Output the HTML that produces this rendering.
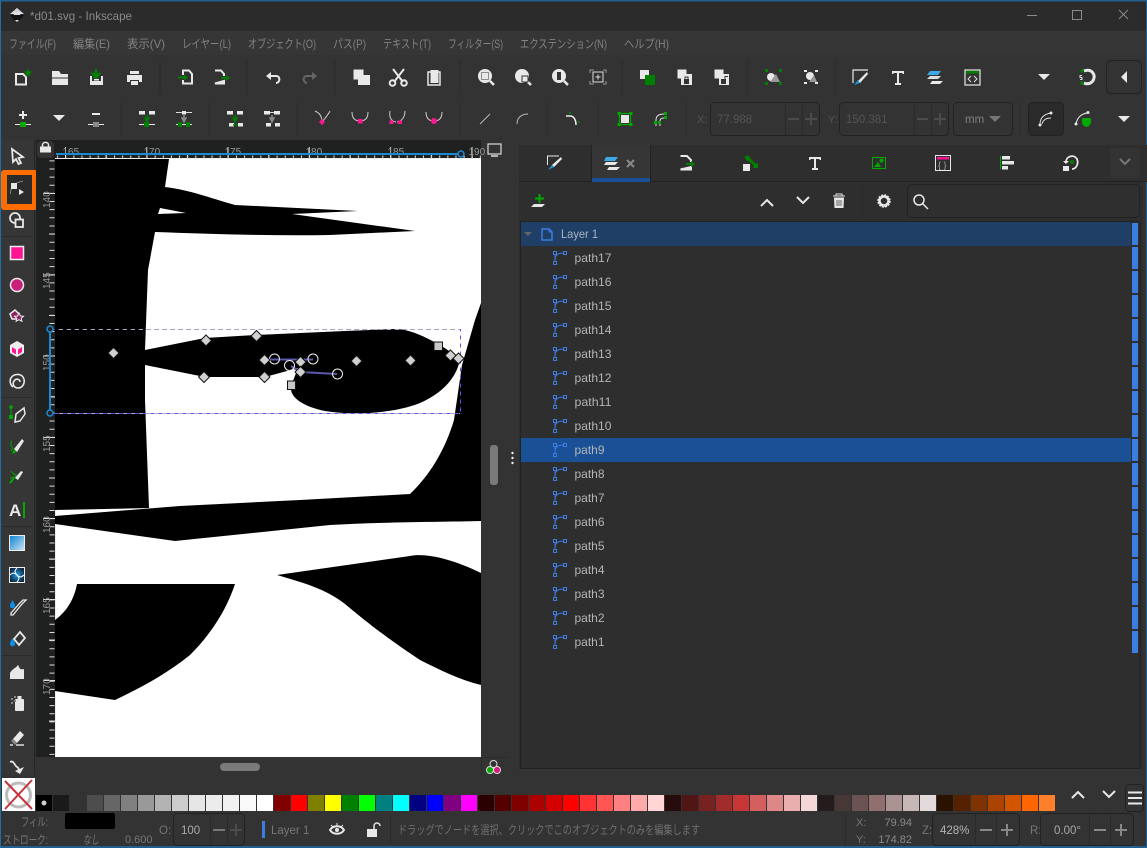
<!DOCTYPE html>
<html><head><meta charset="utf-8"><title>Inkscape</title>
<style>
html,body{margin:0;padding:0;background:#333;width:1147px;height:848px;overflow:hidden}
svg{display:block}
text{font-family:"Liberation Sans","Noto Sans CJK JP",sans-serif;font-size:11px;fill:#8f8f8f}
.m{font-size:12px;fill:#828282}
.p{font-size:12px;fill:#b4b4b4}
.w{fill:#e8e8e8}.g{fill:#008000}.k{fill:#ff1493}
.s{stroke:#e8e8e8;fill:none}
.sep{stroke:#2b2b2b;stroke-width:1}
.box{fill:#2f2f2f;stroke:#222;stroke-width:1}
</style></head><body>
<svg width="1147" height="848" viewBox="0 0 1147 848" xmlns="http://www.w3.org/2000/svg">
<defs>
<path id="nd" d="M0-5.500L5.500 0L0 5.500L-5.500 0Z" fill="#d0d0d0" stroke="#111" stroke-width="1"/>
<g id="pt"><path d="M-6.500-3V3.500M-6.500 1.500C-6.500-3-3-5 2-5" fill="none" stroke="#3b7de0" stroke-width="1"/><rect x="-8" y="-6.500" width="3" height="3" fill="none" stroke="#3b7de0"/><rect x="-8" y="3.500" width="3" height="3" fill="none" stroke="#3b7de0"/><rect x="2" y="-6.500" width="3" height="3" fill="none" stroke="#3b7de0"/></g>
</defs>
<!-- window -->
<rect width="1147" height="848" fill="#333"/>
<rect y="0" width="1147" height="31" fill="#2b2b2b"/>
<rect y="31" width="1147" height="24" fill="#363636"/>
<rect y="0" width="1147" height="1.500" fill="#1f5f92"/>
<rect y="846" width="1147" height="2" fill="#1f5f92"/>
<rect x="0" width="1" height="848" fill="#1f6fa8"/>
<rect x="1146" width="1" height="848" fill="#1f5f92"/>
<!-- title -->
<path d="M17 8L24 14L20 14L21 18L17 22L13 18L14 14L10 14Z" fill="#ddd"/><path d="M10 15L24 15L20 20L14 20Z" fill="#111"/><path d="M17 8L21 12L13 12Z" fill="#cfd2e0"/>
<text x="30" y="20" style="font-size:12px;fill:#8a8a8a" textLength="102" lengthAdjust="spacingAndGlyphs">*d01.svg - Inkscape</text>
<path d="M1027 15.500H1037" stroke="#8a8a8a"/><rect x="1072.500" y="10.500" width="9" height="9" fill="none" stroke="#8a8a8a"/><path d="M1119 10L1128 19M1128 10L1119 19" stroke="#8a8a8a"/>
<!-- menu -->
<text class="m" x="9" y="48" textLength="47" lengthAdjust="spacingAndGlyphs">ファイル(F)</text>
<text class="m" x="73" y="48" textLength="37" lengthAdjust="spacingAndGlyphs">編集(E)</text>
<text class="m" x="127" y="48" textLength="38" lengthAdjust="spacingAndGlyphs">表示(V)</text>
<text class="m" x="182" y="48" textLength="49" lengthAdjust="spacingAndGlyphs">レイヤー(L)</text>
<text class="m" x="248" y="48" textLength="68" lengthAdjust="spacingAndGlyphs">オブジェクト(O)</text>
<text class="m" x="333" y="48" textLength="33" lengthAdjust="spacingAndGlyphs">パス(P)</text>
<text class="m" x="383" y="48" textLength="48" lengthAdjust="spacingAndGlyphs">テキスト(T)</text>
<text class="m" x="448" y="48" textLength="55" lengthAdjust="spacingAndGlyphs">フィルター(S)</text>
<text class="m" x="520" y="48" textLength="87" lengthAdjust="spacingAndGlyphs">エクステンション(N)</text>
<text class="m" x="624" y="48" textLength="45" lengthAdjust="spacingAndGlyphs">ヘルプ(H)</text>
<!-- toolbar separators -->
<g class="sep">
<path d="M160 60V94M247 60V94M335 60V94M460 60V94M622 60V94M747 60V94M835 60V94"/>
<path d="M121 102V136M209 102V136M297 102V136M460 102V136M547 102V136M598 102V136M686 102V136M1020 102V136"/>
</g>
<!-- toolbar 1 -->
<path d="M16 74H23L26 77V84.500H16Z" fill="none" stroke="#e8e8e8" stroke-width="2"/><path d="M28 68.500l1.300 2.700 3 .3-2.200 2 .6 3-2.700-1.500-2.700 1.500.6-3-2.200-2 3-.3z" class="g"/>
<path d="M52 71H59L61 74H68V85H52Z" class="w"/><path d="M52 78H68" stroke="#333"/>
<path d="M96 69V76M93 74L96 78L99 74Z" stroke="#008000" stroke-width="2.500" class="g"/><path d="M90 76H92V81H101V76H103V85H90Z" class="w"/><rect x="94" y="79" width="5" height="1.500" class="w"/>
<path d="M130 71H139V74H130ZM127 75H142V82H139V80H130V82H127ZM131 81H138V85H131Z" class="w"/>
<path d="M183 75V70.500H189L192 74V83.500H183V80" fill="none" stroke="#e8e8e8" stroke-width="2"/><path d="M178 76.500H184V74.500L188 77.500L184 80.500V78.500H178Z" class="g"/>
<path d="M215 70.500H221L224 74V76M224 81V83.500H215Z" fill="none" stroke="#e8e8e8" stroke-width="2"/><path d="M221 77H226V75L230 78L226 81V79H221Z" class="g"/>
<path d="M268 76H276C281 76 280 83 276 83" fill="none" stroke="#e8e8e8" stroke-width="2"/><path d="M271 72L266 76L271 80Z" class="w"/>
<path d="M315 76H307C302 76 303 83 307 83" fill="none" stroke="#666" stroke-width="2"/><path d="M312 72L317 76L312 80Z" fill="#666"/>
<rect x="353" y="69" width="11" height="11" class="w" stroke="#333"/><rect x="358" y="75" width="12" height="10" class="w"/>
<path d="M393 69L403 82M404 69L394 82" stroke="#e8e8e8" stroke-width="2"/><circle cx="392.500" cy="83" r="2.800" fill="none" stroke="#e8e8e8" stroke-width="2"/><circle cx="404" cy="83" r="2.800" fill="none" stroke="#e8e8e8" stroke-width="2"/>
<rect x="428" y="72" width="12" height="13" fill="none" stroke="#e8e8e8" stroke-width="1.500"/><rect x="430.500" y="70" width="8" height="13" class="w"/>
<circle cx="485" cy="76" r="7" class="w"/><path d="M490 81L494 85" stroke="#e8e8e8" stroke-width="2.500"/><rect x="481.500" y="72.500" width="7" height="7" fill="none" stroke="#333" stroke-dasharray="1 1"/>
<circle cx="522" cy="76" r="7" class="w"/><path d="M527 81L531 85" stroke="#e8e8e8" stroke-width="2.500"/><rect x="522" y="76" width="6" height="6" fill="#e8e8e8" stroke="#333"/>
<circle cx="559" cy="76" r="7" class="w"/><path d="M564 81L568 85" stroke="#e8e8e8" stroke-width="2.500"/><rect x="556.500" y="71.500" width="5" height="9" fill="#333" stroke="#e8e8e8"/>
<path d="M590 73V70H594M603 70H606V73M606 81V84H603M594 84H590V81" fill="none" stroke="#999"/><rect x="593" y="72" width="10" height="10" fill="none" stroke="#ddd"/><path d="M598 74.500V79.500M595.500 77H600.500" stroke="#ddd"/>
<rect x="640" y="70" width="9" height="9" class="w"/><rect x="645" y="75" width="10" height="10" class="g"/>
<rect x="677" y="69" width="10" height="10" class="w" stroke="#333"/><rect x="681" y="74" width="11" height="11" class="w"/><path d="M684 79H689V84H684Z" fill="#333"/><path d="M685 79V77H688V79" stroke="#333" fill="none"/>
<rect x="714" y="69" width="10" height="10" class="w" stroke="#333"/><rect x="719" y="74" width="10" height="11" class="w"/><path d="M721 79H726V84H721Z" fill="#333"/><path d="M725 79V76.500H728" stroke="#333" fill="none"/>
<path d="M765 69h3v3h-3zM765 82h3v3h-3zM779 69h3v3h-3zM779 82h3v3h-3z" class="g"/><circle cx="771" cy="77" r="4" class="w"/><path d="M776 74L780 82H770Z" fill="#999"/>
<path d="M804 70h3v2h-3zM815 70h3v2h-3zM804 82h3v2h-3zM815 82h3v2h-3z" class="w"/><circle cx="810" cy="76" r="4" class="w"/><path d="M814 75L817 82H809Z" fill="#999"/>
<path d="M853 83V70H868" fill="none" stroke="#e8e8e8" stroke-width="1.200"/><path d="M867 72L858 81L860 83L868 74Z" class="w"/><path d="M854 85L858 80L860 83Z" fill="#1b98e0"/>
<path d="M892 71H904V74H903L902 73H899V83H901V85H895V83H897V73H894L893 74H892Z" class="w"/>
<path d="M930 71H941L938 75H927Z" fill="#3fa9e8"/><path d="M930 76H941L938 79H927Z" fill="#e8e8e8" opacity=".95"/><path d="M932 81H943L940 84H930Z" class="w"/>
<rect x="965" y="70" width="15" height="15" fill="none" stroke="#e8e8e8" stroke-width="1.200"/><rect x="966" y="71" width="13" height="2.500" class="g"/><path d="M971 76L968 79L971 82M974 76L977 79L974 82" fill="none" stroke="#ddd"/>
<path d="M1038 74H1050L1044 80Z" class="w"/>
<path d="M1084 71C1092 68 1095 75 1094 78C1093 83 1088 85 1084 83" fill="none" stroke="#e8e8e8" stroke-width="3"/><circle cx="1082" cy="71" r="1.800" class="g"/><circle cx="1082" cy="83" r="1.800" class="g"/><path d="M1082 75.500H1080V77.500H1082V79.500H1080" stroke="#ddd" fill="none"/>
<rect x="1106.500" y="60.500" width="35" height="33" rx="5" fill="#333" stroke="#232323"/><path d="M1127 71V83L1121 77Z" class="w"/>
<!-- toolbar 2 -->
<path d="M23 111V119M19 115H27" stroke="#e8e8e8" stroke-width="2"/><path d="M15 124.500H31" stroke="#e8e8e8"/><rect x="20" y="122" width="6" height="5" fill="#0a0"/>
<path d="M53 115H65L59 121Z" class="w"/>
<path d="M92 114H100" stroke="#e8e8e8" stroke-width="2"/><path d="M88 124.500H104" stroke="#e8e8e8"/><rect x="93" y="122" width="6" height="5" fill="#888"/>
<rect x="139" y="111" width="6" height="3.500" class="w"/><rect x="149" y="111" width="6" height="3.500" class="w"/><path d="M147 115V120M145 118L147 122L149 118Z" stroke="#008000" stroke-width="1.500" class="g"/><path d="M139 124.500H155" stroke="#e8e8e8"/><rect x="144" y="122" width="5" height="5" class="g"/>
<path d="M176 112.500H192" stroke="#ddd"/><rect x="182" y="111" width="4" height="3.500" class="w"/><path d="M184 115V120M182 118L184 122L186 118Z" stroke="#888" stroke-width="1.500" fill="#888"/><path d="M176 124.500H192" stroke="#ddd"/><rect x="178" y="122" width="4" height="5" class="g"/><rect x="186" y="122" width="4" height="5" class="g"/>
<rect x="227" y="111" width="6" height="3.500" class="w"/><rect x="237" y="111" width="6" height="3.500" class="w"/><path d="M235 115V120M233 118L235 122L237 118Z" stroke="#008000" stroke-width="1.500" class="g"/><rect x="229" y="123" width="5" height="3.500" class="w"/><rect x="238" y="123" width="5" height="3.500" class="w"/><path d="M233 125H238" stroke="#008000" stroke-width="1.500"/>
<rect x="264" y="111" width="6" height="3.500" class="w"/><rect x="274" y="111" width="6" height="3.500" class="w"/><path d="M270 112.500H274" stroke="#ddd"/><path d="M272 115V120M270 118L272 122L274 118Z" stroke="#888" stroke-width="1.500" fill="#888"/><rect x="266" y="123" width="5" height="3.500" class="w"/><rect x="275" y="123" width="5" height="3.500" class="w"/>
<path d="M315 111C320 113 322 117 322 122M330 111C328 115 325 118 323 121" fill="none" stroke="#ccc"/><path d="M322 119L325 122L322 125L319 122Z" class="k"/>
<path d="M352 112C352 118 355 121 360 121C365 121 368 118 368 112" fill="none" stroke="#ccc"/><rect x="358" y="119" width="4.500" height="4.500" class="k"/>
<path d="M390 111C389 117 391 121 396 122M405 111C405 117 402 121 397 122" fill="none" stroke="#ccc"/><rect x="389.500" y="120.500" width="4" height="3.500" class="k"/><rect x="398" y="120.500" width="4" height="3.500" class="k"/>
<path d="M426 112C426 118 429 121 434 121C439 121 442 118 442 112" fill="none" stroke="#ccc"/><circle cx="434" cy="121" r="3" class="k"/>
<path d="M480 124L490 114" stroke="#bbb"/>
<path d="M517 124C517 118 521 114 528 114" fill="none" stroke="#bbb"/>
<path d="M566 116H570C574 116 576 120 576 125" fill="none" stroke="#eee" stroke-width="1.500"/><path d="M569 112h2v2h-2zM578 121h2v2h-2z" class="g"/>
<rect x="619.500" y="113.500" width="11" height="11" fill="none" stroke="#0a0" stroke-width="1.200"/><rect x="621" y="115" width="8" height="8" class="w"/><path d="M617.500 112h3v3h-3zM629.500 112h3v3h-3zM617.500 123h3v3h-3zM629.500 123h3v3h-3z" fill="#0a0"/>
<path d="M656 126V120C656 116 659 114 664 114M660 126V121C660 119 661 118 664 118" fill="none" stroke="#ddd"/><path d="M664 112h3v3h-3zM664 116h3v3h-3zM654 121h3v3h-3zM658 121h3v3h-3z" fill="#0a0"/>
<text x="697" y="123" style="fill:#555">X:</text>
<rect x="710.500" y="102.500" width="109" height="33" rx="4" style="fill:#333;stroke:#222"/>
<path d="M785.500 103V135M802.500 103V135" stroke="#2a2a2a"/>
<text x="717" y="123" style="font-size:11.500px;fill:#555">77.988</text>
<path d="M788 119H799M805 119H817M811 113V125" stroke="#4b4b4b" stroke-width="2"/>
<text x="828" y="123" style="fill:#555">Y:</text>
<rect x="839.500" y="102.500" width="109" height="33" rx="4" style="fill:#333;stroke:#222"/>
<path d="M914.500 103V135M931.500 103V135" stroke="#2a2a2a"/>
<text x="846" y="123" style="font-size:11.500px;fill:#555">150.381</text>
<path d="M917 119H928M934 119H946M940 113V125" stroke="#4b4b4b" stroke-width="2"/>
<rect x="953.500" y="102.500" width="59" height="33" rx="4" style="fill:#333;stroke:#222"/>
<text x="965" y="123" style="font-size:11.500px;fill:#808080">mm</text><path d="M989 116H1001L995 122Z" fill="#777"/>
<rect x="1028.500" y="102.500" width="35" height="33" rx="4" style="fill:#2a2a2a;stroke:#222"/>
<path d="M1040 124C1040 118 1044 114 1051 113M1042 124C1043 120 1046 118 1051 118" fill="none" stroke="#ddd"/><circle cx="1040" cy="125" r="1.500" class="w"/><circle cx="1051" cy="113" r="1.500" class="w"/>
<path d="M1076 124C1077 118 1081 114 1087 113" fill="none" stroke="#ddd" stroke-width="1.200"/><circle cx="1076" cy="124" r="1.500" class="w"/><circle cx="1088" cy="112.500" r="1.500" class="w"/><path d="M1082 118H1091V122C1091 125 1088 127 1086.500 127C1085 127 1082 125 1082 122Z" fill="#0a0"/>
<path d="M1118 116H1130L1124 122Z" class="w"/>
<!-- left toolbar -->
<rect x="1" y="140" width="33" height="635" fill="#363636"/>
<path d="M2 236.500H33M2 397.500H33M2 526.500H33M2 655.500H33" stroke="#2b2b2b"/>
<path d="M34.500 140V775" stroke="#252525"/>
<path d="M12 149L23 157L18.500 158L21 163L18.500 164L16 159L13 162Z" fill="none" stroke="#e8e8e8" stroke-width="1.800"/>
<rect x="1" y="170" width="37" height="40" rx="3" fill="#ff6c00"/><rect x="7" y="175" width="25" height="29" fill="#2b2b2b"/>
<path d="M10.500 194C10.500 186 14 183 23 181" fill="none" stroke="#999" stroke-width=".8"/><rect x="11" y="183" width="6" height="6" class="w"/><path d="M19 189L24 192L19 195Z" class="w"/>
<circle cx="15" cy="218" r="5" fill="none" stroke="#e8e8e8" stroke-width="1.800"/><rect x="15.500" y="219.500" width="7.500" height="7.500" fill="#333" stroke="#e8e8e8" stroke-width="1.800"/>
<rect x="10.500" y="246.500" width="13" height="13" fill="#ff1493" stroke="#eee" stroke-width="1.500"/>
<circle cx="17" cy="285" r="6.500" fill="#c8207a" stroke="#eee" stroke-width="1.500"/>
<path d="M10 314L15 310L19 314L17 319L12 319Z" fill="#8a2060" stroke="#eee" stroke-width="1.500"/><path d="M19 313l1.500 3 3 .3-2.300 2 .7 3-2.900-1.600-2.900 1.600.7-3-2.300-2 3-.3z" fill="#8a2060" stroke="#eee"/>
<path d="M17 341L24 345V353L17 357L10 353V345Z" fill="#eee"/><path d="M12 347L16 349.500V354.500L12 352Z" fill="#ff1493"/><path d="M22 347L18 349.500V354.500L22 352Z" fill="#ff1493"/>
<path d="M13 387C10 385 9.500 380 11 378C13 374 20 373 23 377C26 382 23 388 18 388C14 388 12 384 14 381C16 378 20 379 20 382" fill="none" stroke="#e8e8e8" stroke-width="1.600"/>
<path d="M11 407V418" stroke="#0a0"/><circle cx="11" cy="407" r="1.800" fill="#0a0"/><rect x="9" y="415" width="4" height="4" fill="#0a0"/><path d="M15 422L16 414L24 408L25 414L20 421Z" fill="none" stroke="#e8e8e8" stroke-width="1.500"/>
<path d="M24 441L17 452L14 449L22 439Z" class="w"/><path d="M11 451C15 447 8 445 12 441" fill="none" stroke="#0a0"/><path d="M12 454L14 449L17 452Z" fill="#0a0"/>
<path d="M23 472L18 480L15 478L21 471Z" class="w"/><path d="M10 483L14 478" stroke="#0a0" stroke-width="2"/><path d="M11 471C13 474 15 475 17 475M10 478C13 478 14 477 16 476" fill="none" stroke="#0a0"/>
<text x="9" y="516" style="font-size:17px;font-weight:bold;fill:#e8e8e8">A</text><rect x="23" y="502" width="2" height="16" fill="#0a0"/>
<defs><linearGradient id="gr" x1="0" y1="0" x2="1" y2="1"><stop offset="0" stop-color="#0b7fd0"/><stop offset="1" stop-color="#cfe8f8"/></linearGradient>
<radialGradient id="mg"><stop offset="0" stop-color="#25a5f0"/><stop offset="1" stop-color="#0e2c48"/></radialGradient></defs>
<rect x="9.500" y="535.500" width="15" height="15" fill="url(#gr)" stroke="#eee"/>
<rect x="9.500" y="567.500" width="15" height="15" fill="url(#mg)" stroke="#eee"/><path d="M10 575C13 572 15 573 17 575C19 577 21 578 24 575M17 568C14 571 15 573 17 575C19 577 20 579 17 582" fill="none" stroke="#fff" stroke-width="1"/>
<path d="M26 600L22 604L13 615L11 615L11 613L20 603L23 600Z" fill="none" stroke="#e8e8e8" stroke-width="1.300"/><path d="M12.500 600C11 603 10 604 10 606C10 609 15 609 15 606C15 604 14 603 12.500 600Z" fill="#0b8fe8"/>
<path d="M20 632L25 638L19 645L14 639Z" fill="none" stroke="#e8e8e8" stroke-width="1.800"/><path d="M12.500 638C11 641 10 642 10 644C10 647 15 647 15 644C15 642 14 641 12.500 638Z" fill="#0b8fe8"/>
<path d="M10 679V673C12 669 16 668 18 665C20 668 19 670 24 669V679Z" class="w"/>
<rect x="15" y="699" width="9" height="12" rx="1" class="w"/><rect x="17.500" y="696" width="4" height="3" class="w"/><path d="M11 698h2v2h-2zM14 700h2v2h-2zM11 702h2v2h-2zM14 696h2v2h-2z" fill="#888"/>
<path d="M13 739L20 731L24 735L17 743Z" class="w"/><path d="M13 739L17 743L15 745L11 741Z" fill="#888"/><path d="M10 745h3M16 745h8" stroke="#ddd" stroke-width="1.500"/>
<path d="M10 762C14 760 14 765 17 767C19 768 19 770 18 772" fill="none" stroke="#e8e8e8" stroke-width="1.800"/><path d="M24 767L20 774L15 771Z" class="w"/>
<!-- rulers -->
<rect x="36" y="140" width="471" height="19" fill="#1f2020"/>
<rect x="36" y="159" width="19" height="598" fill="#1f2020"/>
<rect x="36" y="757" width="471" height="18" fill="#333"/>
<rect x="481" y="140" width="26" height="635" fill="#333"/>
<rect x="37" y="141" width="17" height="17" rx="4" fill="#333"/>
<path d="M40 146.500H51V152.500H40Z" class="w"/><path d="M42.500 147V145C42.500 141.500 48.500 141.500 48.500 145V147" fill="none" stroke="#e8e8e8" stroke-width="1.500"/>
<path d="M55 158.500H481" stroke="#eee"/>
<path d="M55 157H481" stroke="#ddd" stroke-width="3" stroke-dasharray="1 7.130" stroke-dashoffset="-2.100"/>
<path d="M65.500 147V159M146.800 147V159M228 147V159M309.300 147V159M390.600 147V159M472 147V159" stroke="#ddd"/>
<path d="M106 153V159M187.400 153V159M268.700 153V159M350 153V159M431.300 153V159" stroke="#ddd"/>
<text x="62.500" y="155" style="font-size:10px;fill:#999">165</text><text x="143.500" y="155" style="font-size:10px;fill:#999">170</text><text x="224.500" y="155" style="font-size:10px;fill:#999">175</text><text x="305.500" y="155" style="font-size:10px;fill:#999">180</text><text x="387.500" y="155" style="font-size:10px;fill:#999">185</text><text x="468.500" y="155" style="font-size:10px;fill:#999">190</text>
<path d="M55.500 159V757" stroke="#eee" stroke-width="1"/>
<path d="M52 159V757" stroke="#ddd" stroke-width="5" stroke-dasharray="1 7.130" stroke-dashoffset="-1.400"/>
<path d="M43 193.500H55M43 275H55M43 356H55M43 437.500H55M43 518.500H55M43 599.500H55M43 680.500H55M49 234H55M49 315.500H55M49 397H55M49 478H55M49 559H55M49 640H55M49 721H55" stroke="#ddd"/>
<text transform="translate(50 208) rotate(-90)" style="font-size:10px;fill:#999">140</text>
<text transform="translate(50 289) rotate(-90)" style="font-size:10px;fill:#999">145</text>
<text transform="translate(50 371) rotate(-90)" style="font-size:10px;fill:#999">150</text>
<text transform="translate(50 452) rotate(-90)" style="font-size:10px;fill:#999">155</text>
<text transform="translate(50 533) rotate(-90)" style="font-size:10px;fill:#999">160</text>
<text transform="translate(50 614) rotate(-90)" style="font-size:10px;fill:#999">165</text>
<text transform="translate(50 695) rotate(-90)" style="font-size:10px;fill:#999">170</text>
<!-- canvas -->
<rect x="56" y="159" width="425" height="598" fill="#fff"/>
<path d="M55 159H169L165 187C190 190 210 198 235 205L358 211L292 214L415 231L330 235C270 236 210 234 155 232L148 270L145 350L205 338L256 335L345 331L395 329C410 329 425 337 440 345L460 358C458 375 445 392 420 403C395 413 355 416 325 411C305 407 289 398 291 386L298 368L265 377L205 377L145 365L145 400L149 508L55 510Z" fill="#000"/>
<path d="M160 208L186 213L158 214Z" fill="#fff"/>
<path d="M55 516L180 506L300 500L410 494C430 475 445 450 454 420L462 365L475 320L481 303V521C440 522 380 522 330 525L175 541L55 524Z" fill="#000"/>
<path d="M277 575L340 566L410 556C425 553 450 558 481 573V685C460 680 440 670 420 660C390 640 370 625 345 604C325 588 300 582 277 575Z" fill="#000"/>
<path d="M77 584H235C228 605 215 630 190 655C165 675 140 688 115 700L55 691V620C66 612 74 600 77 584Z" fill="#000"/>
<!-- selection -->
<rect x="50.500" y="329.500" width="410" height="84" fill="none" stroke="#5555ff" stroke-dasharray="4 4" stroke-width="1"/>
<path d="M55 329.500H460M55 413.500H460" fill="none" stroke="#aaa" stroke-dasharray="4 4" stroke-dashoffset="4"/>
<path d="M56 154H461" stroke="#1b8ad2" stroke-width="2"/><circle cx="461" cy="154" r="3" fill="#222" stroke="#1b8ad2" stroke-width="1.500"/>
<path d="M50 329V413" stroke="#1b8ad2" stroke-width="2"/><circle cx="50" cy="329" r="3" fill="#222" stroke="#1b8ad2" stroke-width="1.500"/><circle cx="50" cy="413" r="3" fill="#222" stroke="#1b8ad2" stroke-width="1.500"/>
<!-- handles -->
<path d="M269 359.500H313" stroke="#5a5aaa" stroke-width="2"/><path d="M291 366L300 372L337 374" fill="none" stroke="#5a5aaa" stroke-width="2"/>
<g fill="none" stroke="#eee"><circle cx="274.500" cy="359" r="5"/><circle cx="313" cy="359" r="5"/><circle cx="289.500" cy="365.500" r="5"/><circle cx="337.500" cy="374" r="5"/></g>
<use href="#nd" x="113.500" y="353"/><use href="#nd" x="206" y="340.500"/><use href="#nd" x="256.500" y="336"/><use href="#nd" x="204" y="377"/><use href="#nd" x="264.500" y="377"/><use href="#nd" x="264.500" y="360"/><use href="#nd" x="300.500" y="362"/><use href="#nd" x="300.500" y="372"/><use href="#nd" x="356.500" y="361"/><use href="#nd" x="410.500" y="360.500"/><use href="#nd" x="450.500" y="355.500"/><use href="#nd" x="458.500" y="358.500"/>
<rect x="434" y="342" width="8.500" height="8.500" fill="#c8c8c8" stroke="#111"/><rect x="287.500" y="381" width="8" height="8.500" fill="#c8c8c8" stroke="#111"/>
<!-- scrollbars -->
<rect x="490" y="445" width="8" height="40" rx="3" fill="#7a7a7a"/>
<rect x="220" y="763" width="40" height="8" rx="4" fill="#7a7a7a"/>
<path d="M481.500 757V775M481 757.500H507" stroke="#2b2b2b"/>
<circle cx="490" cy="770" r="3.500" fill="#0a0" stroke="#ddd"/><circle cx="497" cy="770" r="3.500" fill="#d61a7f" stroke="#ddd"/><circle cx="493.500" cy="764" r="3.500" fill="#333" stroke="#ddd"/>
<rect x="488" y="144" width="13" height="10" fill="none" stroke="#ddd" stroke-width="1.200"/><path d="M491 156H498" stroke="#ddd" stroke-width="1.500"/>
<circle cx="512.500" cy="453" r="1.200" fill="#eee"/><circle cx="512.500" cy="458" r="1.200" fill="#eee"/><circle cx="512.500" cy="463" r="1.200" fill="#eee"/>
<!-- right panel -->
<rect x="519" y="145" width="628" height="36" fill="#2e2e2e"/>
<rect x="519" y="181" width="628" height="1" fill="#222"/>
<rect x="519" y="182" width="624" height="587" fill="#2e2e2e"/>
<rect x="592" y="145" width="58" height="33" fill="#363636"/>
<path d="M591.500 145V181M650.500 145V181" stroke="#222"/>
<rect x="592" y="178" width="58" height="4" fill="#1a5196"/>
<path d="M547.500 165V156H559" fill="none" stroke="#e8e8e8" stroke-width="1"/><path d="M561 157L552 165L554 167L562 159Z" class="w"/><path d="M548 170L552 165L554 167Z" fill="#1b98e0"/>
<path d="M606 157H618L615 161H604Z" fill="#3fa9e8"/><path d="M606 162H618L615 165H604Z" class="w"/><path d="M609 167H620L617 170H607Z" class="w"/>
<path d="M627 160L634 167M634 160L627 167" stroke="#8a8a8a" stroke-width="2"/>
<path d="M680.500 156H687L691 160V162M691 167V169.500H680.500Z" fill="none" stroke="#e8e8e8" stroke-width="2"/><path d="M686 163H691V161L695 164L691 167V165H686Z" class="g"/>
<path d="M748 158L756 166" stroke="#008000" stroke-width="3"/><path d="M744 156.500L749 155.500L750 160L747 161ZM753 168L758 168L758 163L755 164Z" class="g"/><rect x="743" y="164" width="7" height="7" class="w"/>
<path d="M809 157H821V160H820L819 159H816V168H818V170H812V168H814V159H811L810 160H809Z" class="w"/>
<rect x="872.500" y="157.500" width="13" height="11" fill="none" stroke="#0a0"/><path d="M874 167L878 162L881 167Z" fill="#0a0"/><circle cx="881.500" cy="160.500" r="2" fill="#0a0"/>
<rect x="935.500" y="155.500" width="15" height="15" fill="none" stroke="#e8e8e8"/><rect x="937" y="157" width="12" height="2.500" fill="#ff1493"/>
<text x="938" y="168" style="font-size:9px;fill:#aaa">{ }</text>
<path d="M1000.500 156V169" stroke="#0a0"/><rect x="1002" y="156" width="8" height="3.500" class="w"/><rect x="1002" y="161" width="12" height="3.500" class="w"/><rect x="1002" y="166" width="6" height="3.500" class="w"/>
<path d="M1066 162C1066 156 1074 154 1077 159C1079 164 1076 169 1072 169" fill="none" stroke="#e8e8e8" stroke-width="1.800"/><path d="M1063 161H1069L1066 164Z" class="w"/><circle cx="1072" cy="162" r="2" class="g"/><rect x="1063" y="166" width="6" height="5" class="w"/>
<rect x="1110" y="148" width="30" height="30" rx="3" fill="#333"/><path d="M1120 159L1125 164L1130 159" fill="none" stroke="#777" stroke-width="2"/>
<!-- panel toolbar -->
<path d="M539.500 194V203M535 198.500H544" stroke="#0a0" stroke-width="2"/><path d="M534 204H545L542 207H531Z" class="w"/>
<path d="M761 206L767 200L773 206" fill="none" stroke="#e8e8e8" stroke-width="2"/>
<path d="M797 197L803 203L809 197" fill="none" stroke="#e8e8e8" stroke-width="2"/>
<path d="M833 196H845M836 196V194H842V196" stroke="#e8e8e8" fill="none"/><path d="M834 197.500H844L843.500 208H834.500Z" class="w"/><path d="M837 200V206M839 200V206M841 200V206" stroke="#444" stroke-width=".8"/>
<path d="M862 184V218" stroke="#2b2b2b"/>
<circle cx="884" cy="201" r="4.500" fill="none" stroke="#e8e8e8" stroke-width="2.500"/><circle cx="884" cy="201" r="6" fill="none" stroke="#e8e8e8" stroke-width="1.500" stroke-dasharray="2 1.150"/>
<rect x="907.500" y="184.500" width="232" height="33" rx="4" fill="#2f2f2f" stroke="#222"/>
<circle cx="919" cy="200" r="5" fill="none" stroke="#e8e8e8" stroke-width="1.500"/><path d="M923 204L928 209" stroke="#e8e8e8" stroke-width="1.500"/>
<!-- layer list -->
<rect x="520.500" y="221.500" width="619.500" height="547" fill="#2e2e2e" stroke="#222"/>
<rect x="521" y="222" width="610" height="24" fill="#1f3f66"/>
<rect x="521" y="438" width="610" height="24" fill="#1a5196"/>
<path d="M524 232H532L528 236Z" fill="#666"/>
<path d="M542 229H549L552 232V240H542Z" fill="none" stroke="#3b7de0" stroke-width="1.500"/><path d="M549 229V232H552" fill="none" stroke="#3b7de0"/>
<text x="561" y="238" class="p" style="fill:#a9b7c6" textLength="37" lengthAdjust="spacingAndGlyphs">Layer 1</text>
<text class="p" x="574.500" y="262" textLength="37" lengthAdjust="spacingAndGlyphs">path17</text>
<text class="p" x="574.500" y="286" textLength="37" lengthAdjust="spacingAndGlyphs">path16</text>
<text class="p" x="574.500" y="310" textLength="37" lengthAdjust="spacingAndGlyphs">path15</text>
<text class="p" x="574.500" y="334" textLength="37" lengthAdjust="spacingAndGlyphs">path14</text>
<text class="p" x="574.500" y="358" textLength="37" lengthAdjust="spacingAndGlyphs">path13</text>
<text class="p" x="574.500" y="382" textLength="37" lengthAdjust="spacingAndGlyphs">path12</text>
<text class="p" x="574.500" y="406" textLength="37" lengthAdjust="spacingAndGlyphs">path11</text>
<text class="p" x="574.500" y="430" textLength="37" lengthAdjust="spacingAndGlyphs">path10</text>
<text class="p" x="574.500" y="454" textLength="30" lengthAdjust="spacingAndGlyphs">path9</text>
<text class="p" x="574.500" y="478" textLength="30" lengthAdjust="spacingAndGlyphs">path8</text>
<text class="p" x="574.500" y="502" textLength="30" lengthAdjust="spacingAndGlyphs">path7</text>
<text class="p" x="574.500" y="526" textLength="30" lengthAdjust="spacingAndGlyphs">path6</text>
<text class="p" x="574.500" y="550" textLength="30" lengthAdjust="spacingAndGlyphs">path5</text>
<text class="p" x="574.500" y="574" textLength="30" lengthAdjust="spacingAndGlyphs">path4</text>
<text class="p" x="574.500" y="598" textLength="30" lengthAdjust="spacingAndGlyphs">path3</text>
<text class="p" x="574.500" y="622" textLength="30" lengthAdjust="spacingAndGlyphs">path2</text>
<text class="p" x="574.500" y="646" textLength="30" lengthAdjust="spacingAndGlyphs">path1</text>
<use href="#pt" x="561.500" y="258"/><use href="#pt" x="561.500" y="282"/><use href="#pt" x="561.500" y="306"/><use href="#pt" x="561.500" y="330"/><use href="#pt" x="561.500" y="354"/><use href="#pt" x="561.500" y="378"/><use href="#pt" x="561.500" y="402"/><use href="#pt" x="561.500" y="426"/><use href="#pt" x="561.500" y="450"/><use href="#pt" x="561.500" y="474"/><use href="#pt" x="561.500" y="498"/><use href="#pt" x="561.500" y="522"/><use href="#pt" x="561.500" y="546"/><use href="#pt" x="561.500" y="570"/><use href="#pt" x="561.500" y="594"/><use href="#pt" x="561.500" y="618"/><use href="#pt" x="561.500" y="642"/>
<path d="M1135 223V653" stroke="#3b7de0" stroke-width="6" stroke-dasharray="22 2"/>
<!-- fill indicator -->
<rect x="2" y="778" width="33" height="33" fill="#fff"/>
<circle cx="18.500" cy="795" r="12" fill="none" stroke="#bbb" stroke-width="3"/>
<path d="M5 781L32 809M32 780L5 809" stroke="#c8323c" stroke-width="2"/>
<!-- palette -->
<rect x="36" y="795" width="16" height="16" fill="#000"/><circle cx="44" cy="803" r="2.500" fill="#ccc"/>
<rect x="53" y="795" width="16" height="16" fill="#1a1a1a"/><rect x="70" y="795" width="16" height="16" fill="#333"/><rect x="87" y="795" width="16" height="16" fill="#4d4d4d"/><rect x="104" y="795" width="16" height="16" fill="#666"/><rect x="121" y="795" width="16" height="16" fill="#808080"/><rect x="138" y="795" width="16" height="16" fill="#999"/><rect x="155" y="795" width="16" height="16" fill="#b3b3b3"/><rect x="172" y="795" width="16" height="16" fill="#ccc"/><rect x="189" y="795" width="16" height="16" fill="#e6e6e6"/><rect x="206" y="795" width="16" height="16" fill="#ececec"/><rect x="223" y="795" width="16" height="16" fill="#f2f2f2"/><rect x="240" y="795" width="16" height="16" fill="#f9f9f9"/><rect x="257" y="795" width="16" height="16" fill="#fff"/>
<rect x="274" y="795" width="16" height="16" fill="#800000"/><rect x="291" y="795" width="16" height="16" fill="#f00"/><rect x="308" y="795" width="16" height="16" fill="#808000"/><rect x="325" y="795" width="16" height="16" fill="#ff0"/><rect x="342" y="795" width="16" height="16" fill="#008000"/><rect x="359" y="795" width="16" height="16" fill="#0f0"/><rect x="376" y="795" width="16" height="16" fill="#008080"/><rect x="393" y="795" width="16" height="16" fill="#0ff"/><rect x="410" y="795" width="16" height="16" fill="#000080"/><rect x="427" y="795" width="16" height="16" fill="#00f"/><rect x="444" y="795" width="16" height="16" fill="#800080"/><rect x="461" y="795" width="16" height="16" fill="#f0f"/>
<rect x="478" y="795" width="16" height="16" fill="#2b0000"/><rect x="495" y="795" width="16" height="16" fill="#500"/><rect x="512" y="795" width="16" height="16" fill="#800000"/><rect x="529" y="795" width="16" height="16" fill="#a00"/><rect x="546" y="795" width="16" height="16" fill="#d40000"/><rect x="563" y="795" width="16" height="16" fill="#f00"/><rect x="580" y="795" width="16" height="16" fill="#f33"/><rect x="597" y="795" width="16" height="16" fill="#f55"/><rect x="614" y="795" width="16" height="16" fill="#ff8080"/><rect x="631" y="795" width="16" height="16" fill="#faa"/><rect x="648" y="795" width="16" height="16" fill="#ffd5d5"/>
<rect x="665" y="795" width="16" height="16" fill="#280b0b"/><rect x="682" y="795" width="16" height="16" fill="#501616"/><rect x="699" y="795" width="16" height="16" fill="#782121"/><rect x="716" y="795" width="16" height="16" fill="#a02c2c"/><rect x="733" y="795" width="16" height="16" fill="#c83737"/><rect x="750" y="795" width="16" height="16" fill="#d35f5f"/><rect x="767" y="795" width="16" height="16" fill="#de8787"/><rect x="784" y="795" width="16" height="16" fill="#e9afaf"/><rect x="801" y="795" width="16" height="16" fill="#f4d7d7"/>
<rect x="818" y="795" width="16" height="16" fill="#241c1c"/><rect x="835" y="795" width="16" height="16" fill="#483737"/><rect x="852" y="795" width="16" height="16" fill="#6c5353"/><rect x="869" y="795" width="16" height="16" fill="#916f6f"/><rect x="886" y="795" width="16" height="16" fill="#ac9393"/><rect x="903" y="795" width="16" height="16" fill="#c8b7b7"/><rect x="920" y="795" width="16" height="16" fill="#e3dbdb"/>
<rect x="937" y="795" width="16" height="16" fill="#2b1100"/><rect x="954" y="795" width="16" height="16" fill="#520"/><rect x="971" y="795" width="16" height="16" fill="#803300"/><rect x="988" y="795" width="16" height="16" fill="#a40"/><rect x="1005" y="795" width="16" height="16" fill="#d45500"/><rect x="1022" y="795" width="16" height="16" fill="#f60"/><rect x="1039" y="795" width="16" height="16" fill="#ff7f2a"/>
<path d="M1072 798L1078 792L1084 798" fill="none" stroke="#e8e8e8" stroke-width="2"/>
<path d="M1103 791L1109 797L1115 791" fill="none" stroke="#e8e8e8" stroke-width="2"/>
<rect x="1125.500" y="784.500" width="18" height="27" rx="4" fill="#333" stroke="#222"/><path d="M1128 792.500H1142M1128 798H1142M1128 803.500H1142" stroke="#e8e8e8" stroke-width="2"/>
<!-- status -->
<text x="21" y="826" style="font-size:12px;fill:#777" textLength="27" lengthAdjust="spacingAndGlyphs">フィル:</text>
<text x="3" y="844" style="font-size:12px;fill:#777" textLength="45" lengthAdjust="spacingAndGlyphs">ストローク:</text>
<rect x="65" y="813" width="50" height="16" rx="2" fill="#000"/>
<text x="83" y="844" style="font-size:12px;fill:#777;font-style:italic" textLength="16" lengthAdjust="spacingAndGlyphs">なし</text>
<text x="125" y="843" style="font-size:11px;fill:#777">0.600</text>
<text x="159" y="834" style="font-size:11.500px;fill:#777">O:</text>
<rect x="173.500" y="813.500" width="71" height="32" rx="4" style="fill:#333;stroke:#222"/>
<path d="M210.500 814V845M227.500 814V845" stroke="#2a2a2a"/>
<text x="181" y="834" style="font-size:11.500px;fill:#aaa">100</text>
<path d="M213 830H225" stroke="#777" stroke-width="2"/><path d="M230 830H242M236 824V836" stroke="#4b4b4b" stroke-width="2"/>
<rect x="262" y="821" width="3" height="17" fill="#3b7de0"/>
<text x="271" y="834" style="font-size:11.500px;fill:#777">Layer 1</text>
<path d="M330 830C333 825 341 825 344 830C341 835 333 835 330 830Z" fill="none" stroke="#e8e8e8" stroke-width="2"/><circle cx="337" cy="830" r="2" class="w"/><path d="M331 825L333 827M343 825L341 827M337 823V826" stroke="#e8e8e8"/>
<rect x="367" y="829" width="10" height="8" class="w"/><path d="M374 829V826C374 822 380 822 380 826" fill="none" stroke="#e8e8e8" stroke-width="1.500"/>
<path d="M390.500 816V844" stroke="#2b2b2b"/>
<text x="398" y="834" style="font-size:12px;fill:#6f6f6f" textLength="302" lengthAdjust="spacingAndGlyphs">ドラッグでノードを選択、クリックでこのオブジェクトのみを編集します</text>
<path d="M845.500 813V846" stroke="#2b2b2b"/>
<text x="856" y="826" style="fill:#777">X:</text><text x="856" y="843" style="fill:#777">Y:</text>
<text x="912" y="826" text-anchor="end" style="fill:#888">79.94</text><text x="912" y="843" text-anchor="end" style="fill:#888">174.82</text>
<text x="922" y="834" style="font-size:11.500px;fill:#777">Z:</text>
<rect x="932.500" y="813.500" width="87" height="32" rx="4" style="fill:#333;stroke:#222"/>
<path d="M975.500 814V845M996.500 814V845" stroke="#2a2a2a"/>
<text x="940" y="834" style="font-size:11.500px;fill:#b5b5b5">428%</text>
<path d="M980 830H992M1001 830H1013M1007 824V836" stroke="#888" stroke-width="2"/>
<text x="1030" y="834" style="font-size:11.500px;fill:#777">R:</text>
<rect x="1040.500" y="813.500" width="93" height="32" rx="4" style="fill:#333;stroke:#222"/>
<path d="M1089.500 814V845M1110.500 814V845" stroke="#2a2a2a"/>
<text x="1054" y="834" style="font-size:11.500px;fill:#a9a9a9">0.00°</text>
<path d="M1094 830H1106M1115 830H1127M1121 824V836" stroke="#888" stroke-width="2"/>
</svg>
</body></html>
